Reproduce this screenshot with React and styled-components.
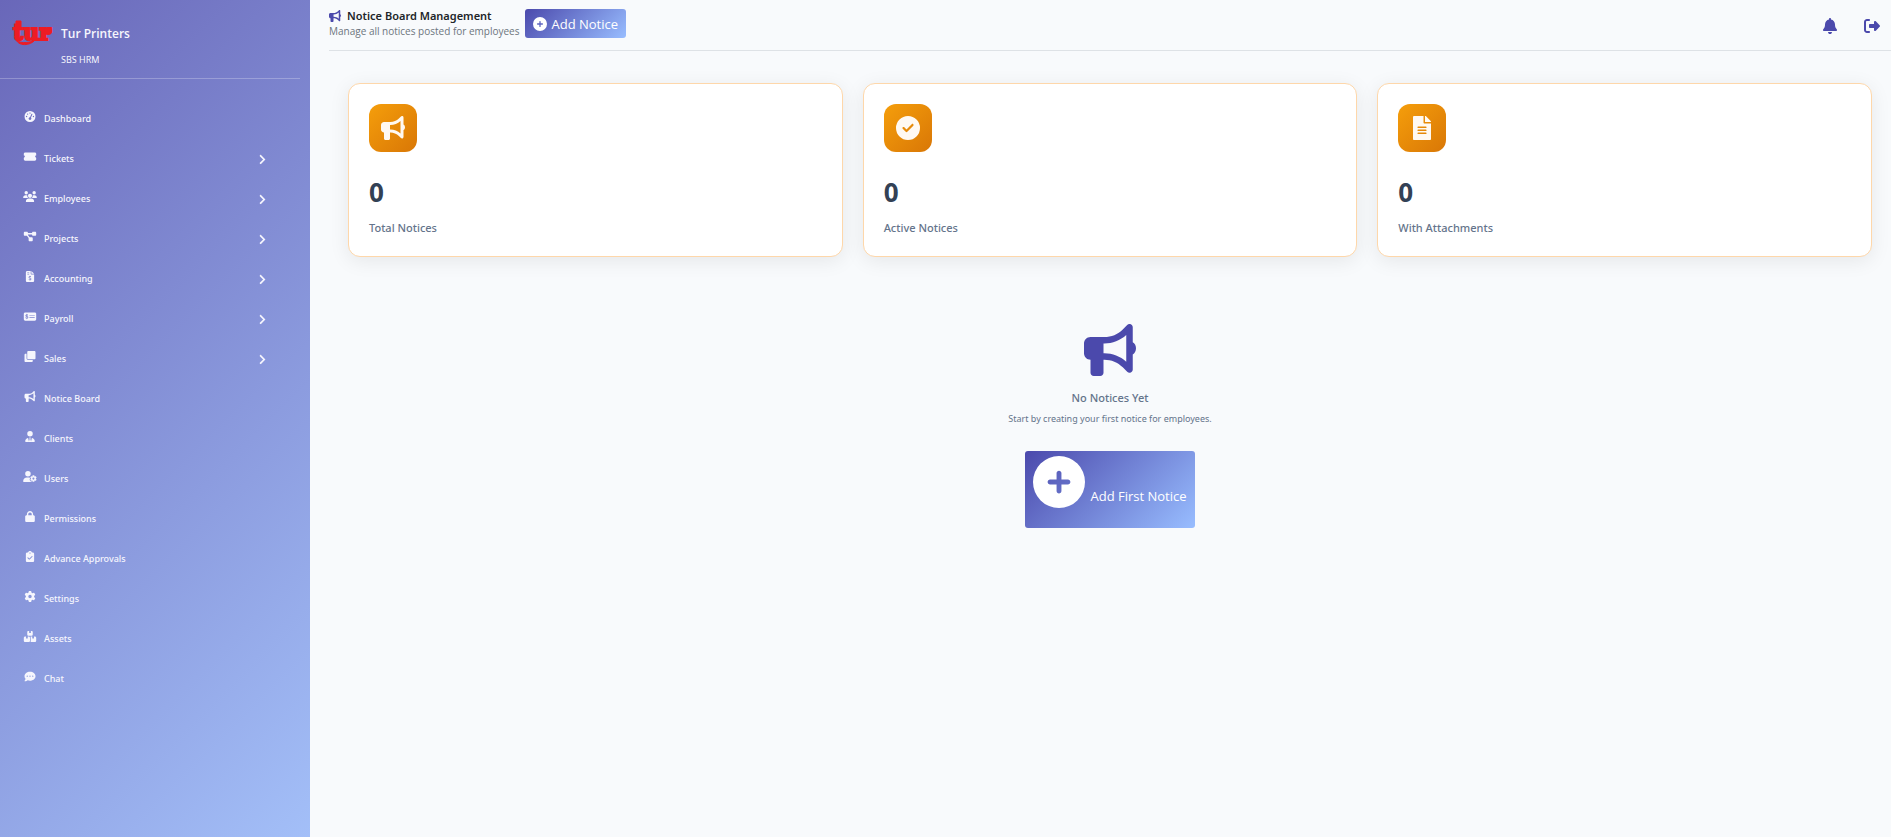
import React from 'react';
import styled, { createGlobalStyle } from 'styled-components';
import { FaChevronRight, FaClone, FaFileAlt } from 'react-icons/fa';
import {
  FaBell,
  FaBoxesStacked,
  FaBullhorn,
  FaCircleCheck,
  FaCirclePlus,
  FaClipboardCheck,
  FaCommentDots,
  FaDiagramProject,
  FaFileInvoiceDollar,
  FaGaugeHigh,
  FaGear,
  FaLock,
  FaMoneyCheckDollar,
  FaRightFromBracket,
  FaTicketSimple,
  FaUserGear,
  FaUsers,
  FaUserTie,
} from 'react-icons/fa6';

const smallFont = "'Noto Sans', 'Open Sans', sans-serif";

const GlobalStyle = createGlobalStyle`
  * {
    box-sizing: border-box;
  }

  body {
    margin: 0;
    background: #f8fafc;
    color: #212529;
    font-family: 'Open Sans', 'Noto Sans', sans-serif;
    font-size: 13px;
  }

  h1, h2, p, ul {
    margin: 0;
    padding: 0;
  }
`;

const Layout = styled.div`
  display: flex;
  min-height: 100vh;
`;

const Sidebar = styled.aside`
  flex: 0 0 310px;
  background: linear-gradient(135deg, #6967b9 0%, #a3bff8 100%);
  color: #f6f6fd;
`;

const Brand = styled.div`
  display: flex;
  gap: 9px;
  height: 79px;
  margin-right: 10px;
  padding: 19px 0 0 12px;
  border-bottom: 1px solid rgba(255, 255, 255, 0.25);
`;

const Logo = styled.svg`
  width: 40px;
  height: 28px;
  overflow: visible;
  fill: #ed1c24;
  stroke: #ed1c24;
`;

const BrandName = styled.p`
  font-size: 12px;
  font-weight: 600;
  line-height: 29px;
`;

const BrandSub = styled.p`
  font-family: ${smallFont};
  font-size: 9px;
  line-height: 24px;
`;

const Menu = styled.ul`
  padding-top: 19px;
  list-style: none;
`;

const MenuLink = styled.a`
  display: flex;
  align-items: center;
  height: 40px;
  padding: 0 42px 0 23px;
  color: inherit;
  font-family: ${smallFont};
  font-size: 9px;
  font-weight: 500;
  text-decoration: none;
`;

const MenuIcon = styled.span`
  display: flex;
  margin-right: 7px;
  padding-bottom: 3px;

  svg {
    width: 14px;
    height: 11px;
  }
`;

const MenuText = styled.span`
  flex: 1;
`;

const Chevron = styled(FaChevronRight)`
  margin-top: 2px;
  font-size: 11px;
`;

const Main = styled.main`
  flex: 1;
  min-width: 0;
`;

const Header = styled.header`
  display: flex;
  align-items: flex-start;
  height: 51px;
  margin-left: 19px;
  padding: 9px 11px 0 0;
  border-bottom: 1px solid #dee2e6;
`;

const Title = styled.h1`
  display: flex;
  align-items: center;
  gap: 6px;
  font-family: ${smallFont};
  font-size: 11px;
  font-weight: 600;
  line-height: 14px;

  svg {
    color: #4b49ac;
    font-size: 12px;
  }
`;

const Subtitle = styled.p`
  color: #6c757d;
  font-size: 10px;
  line-height: 16px;
`;

const PrimaryButton = styled.button`
  display: inline-flex;
  align-items: ${({ $large }) => ($large ? 'flex-start' : 'center')};
  gap: 5px;
  height: ${({ $large }) => ($large ? '77px' : '29px')};
  padding: ${({ $large }) => ($large ? '5px 8px' : '0 8px')};
  border: 0;
  border-radius: 3px;
  background: linear-gradient(135deg, #4b49ac 0%, #98bdff 100%);
  color: #fff;
  font-family: inherit;
  font-size: 13px;
  line-height: 20px;
  cursor: pointer;

  svg {
    flex: none;
    font-size: ${({ $large }) => ($large ? '52px' : '14px')};
  }
`;

const LowLabel = styled.span`
  padding-top: 30px;
`;

const HeaderAction = styled(PrimaryButton)`
  margin-left: 5px;
`;

const HeaderIcons = styled.div`
  display: flex;
  gap: 26px;
  margin-left: auto;
  padding-top: 9px;
`;

const IconButton = styled.button`
  display: flex;
  padding: 0;
  border: 0;
  background: none;
  color: #4b49ac;
  font-size: 16px;
  cursor: pointer;
`;

const Content = styled.div`
  padding: 32px 19px 19px 38px;
`;

const Cards = styled.section`
  display: grid;
  grid-template-columns: repeat(3, 1fr);
  gap: 20px;
`;

const Card = styled.article`
  height: 174px;
  padding: 20px;
  border: 1px solid #fed7aa;
  border-radius: 12px;
  background: #fff;
  box-shadow: 0 4px 20px rgba(0, 0, 0, 0.08);
`;

const CardIcon = styled.div`
  display: flex;
  align-items: center;
  justify-content: center;
  width: 48px;
  height: 48px;
  border-radius: 12px;
  background: linear-gradient(135deg, #f59e0b 0%, #d97706 100%);
  color: #fff9f2;
  font-size: 24px;
`;

const CardValue = styled.p`
  margin-top: 23px;
  color: #334155;
  font-size: 26px;
  font-weight: 700;
  line-height: 34px;
`;

const CardLabel = styled.p`
  margin-top: 10px;
  color: #64748b;
  font-family: ${smallFont};
  font-size: 11px;
  font-weight: 500;
  line-height: 18px;
`;

const Empty = styled.section`
  display: flex;
  flex-direction: column;
  align-items: center;
  padding-top: 67px;
`;

const EmptyIcon = styled(FaBullhorn)`
  color: #4b49ac;
  font-size: 52px;
`;

const EmptyTitle = styled.h2`
  margin-top: 13px;
  color: #64748b;
  font-family: ${smallFont};
  font-size: 11px;
  font-weight: 500;
  line-height: 18px;
`;

const EmptyText = styled.p`
  margin: 3px 0 24px;
  color: #64748b;
  font-family: ${smallFont};
  font-size: 9px;
  line-height: 17px;
`;

const menuItems = [
  { label: 'Dashboard', icon: FaGaugeHigh },
  { label: 'Tickets', icon: FaTicketSimple, nested: true },
  { label: 'Employees', icon: FaUsers, nested: true },
  { label: 'Projects', icon: FaDiagramProject, nested: true },
  { label: 'Accounting', icon: FaFileInvoiceDollar, nested: true },
  { label: 'Payroll', icon: FaMoneyCheckDollar, nested: true },
  { label: 'Sales', icon: FaClone, nested: true },
  { label: 'Notice Board', icon: FaBullhorn },
  { label: 'Clients', icon: FaUserTie },
  { label: 'Users', icon: FaUserGear },
  { label: 'Permissions', icon: FaLock },
  { label: 'Advance Approvals', icon: FaClipboardCheck },
  { label: 'Settings', icon: FaGear },
  { label: 'Assets', icon: FaBoxesStacked },
  { label: 'Chat', icon: FaCommentDots },
];

const stats = [
  { label: 'Total Notices', value: 0, icon: FaBullhorn },
  { label: 'Active Notices', value: 0, icon: FaCircleCheck },
  { label: 'With Attachments', value: 0, icon: FaFileAlt },
];

export default function App() {
  return (
    <Layout>
      <GlobalStyle />
      <Sidebar>
        <Brand>
          <Logo viewBox="0 0 40 28" aria-label="tur">
            <text
              x="1"
              y="21"
              fontFamily="DejaVu Serif"
              fontWeight="700"
              fontSize="22"
              strokeWidth="2"
            >
              tur
            </text>
            <circle cx="36" cy="12" r="4" stroke="none" />
            <path
              d="M4 2L9 2V8H4ZM3 17C4 24 11 25 22 22C17 27 4 28 3 17Z"
              strokeWidth="1"
            />
          </Logo>
          <div>
            <BrandName>Tur Printers</BrandName>
            <BrandSub>SBS HRM</BrandSub>
          </div>
        </Brand>
        <nav>
          <Menu>
            {menuItems.map(({ label, icon: Icon, nested }) => (
              <li key={label}>
                <MenuLink href="#">
                  <MenuIcon>
                    <Icon />
                  </MenuIcon>
                  <MenuText>{label}</MenuText>
                  {nested && <Chevron />}
                </MenuLink>
              </li>
            ))}
          </Menu>
        </nav>
      </Sidebar>
      <Main>
        <Header>
          <div>
            <Title>
              <FaBullhorn />
              Notice Board Management
            </Title>
            <Subtitle>Manage all notices posted for employees</Subtitle>
          </div>
          <HeaderAction>
            <FaCirclePlus />
            Add Notice
          </HeaderAction>
          <HeaderIcons>
            <IconButton aria-label="Notifications">
              <FaBell />
            </IconButton>
            <IconButton aria-label="Log out">
              <FaRightFromBracket />
            </IconButton>
          </HeaderIcons>
        </Header>
        <Content>
          <Cards>
            {stats.map(({ label, value, icon: Icon }) => (
              <Card key={label}>
                <CardIcon>
                  <Icon />
                </CardIcon>
                <CardValue>{value}</CardValue>
                <CardLabel>{label}</CardLabel>
              </Card>
            ))}
          </Cards>
          <Empty>
            <EmptyIcon />
            <EmptyTitle>No Notices Yet</EmptyTitle>
            <EmptyText>Start by creating your first notice for employees.</EmptyText>
            <PrimaryButton $large>
              <FaCirclePlus />
              <LowLabel>Add First Notice</LowLabel>
            </PrimaryButton>
          </Empty>
        </Content>
      </Main>
    </Layout>
  );
}
